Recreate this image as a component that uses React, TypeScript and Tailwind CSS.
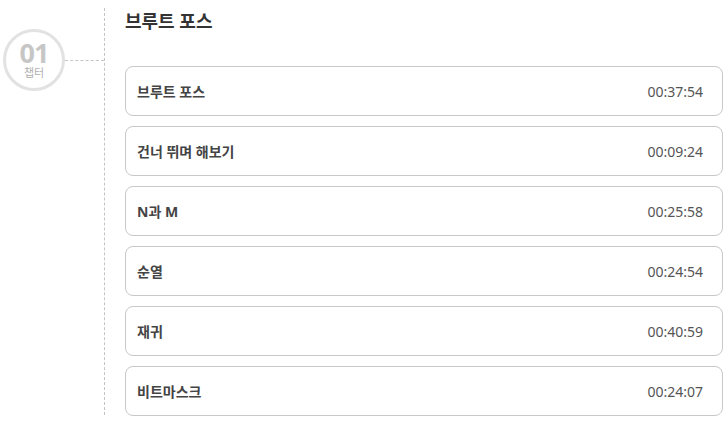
const lessons = [
  { title: '브루트 포스', time: '00:37:54' },
  { title: '건너 뛰며 해보기', time: '00:09:24' },
  { title: 'N과 M', time: '00:25:58' },
  { title: '순열', time: '00:24:54' },
  { title: '재귀', time: '00:40:59' },
  { title: '비트마스크', time: '00:24:07' },
];

export default function App() {
  return (
    <div className="flex w-[727px] h-[425px] bg-white font-['Noto_Sans','Noto_Sans_CJK_KR',sans-serif]">
      {/* chapter badge */}
      <div className="w-[104px] shrink-0 pt-[29px]">
        <div className="flex items-center">
          <div className="ml-[3px] w-[62px] h-[62px] rounded-full border-[3px] border-[#e2e2e2] flex flex-col items-center justify-center">
            <span className="text-[27px] leading-[24px] font-bold text-[#c6c6c6] tracking-[-1px]">01</span>
            <span className="text-[11px] leading-[14px] text-[#b0b0b0] mt-[1px]">챕터</span>
          </div>
          <div className="flex-1 border-t border-dashed border-[#c4c4c4]" />
        </div>
      </div>

      {/* chapter content */}
      <div className="mt-2 h-[407px] border-l border-dashed border-[#c4c4c4] pl-5 flex-1 pr-1">
        <h2 className="text-[18px] leading-6 font-bold text-[#333] mt-[1px]">브루트 포스</h2>
        <div className="mt-[33px] flex flex-col gap-[10px]">
          {lessons.map((l) => (
            <div
              key={l.title}
              className="h-[50px] rounded-lg border border-[#c8c8c8] flex items-center justify-between pl-[11px] pr-[19px]"
            >
              <span className="text-[14px] font-bold text-[#444]">{l.title}</span>
              <span className="text-[14px] text-[#555]">{l.time}</span>
            </div>
          ))}
        </div>
      </div>
    </div>
  );
}
